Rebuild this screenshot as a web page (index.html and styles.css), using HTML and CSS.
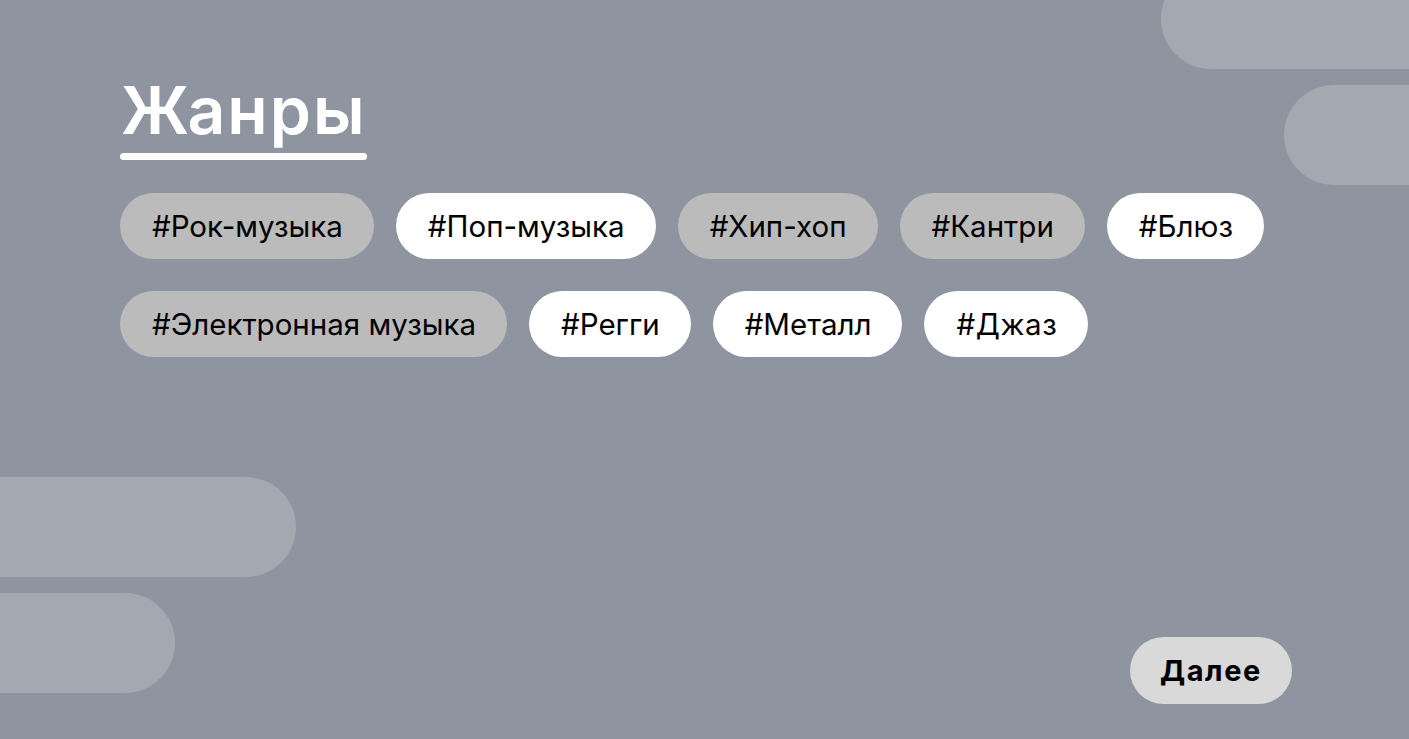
FILE: index.html
```html
<!DOCTYPE html>
<html lang="ru">
<head>
<meta charset="utf-8">
<title>Жанры</title>
<link rel="stylesheet" href="styles.css">
</head>
<body>
<div class="screen">
  <div class="blob blob-tr1"></div>
  <div class="blob blob-tr2"></div>
  <div class="blob blob-bl1"></div>
  <div class="blob blob-bl2"></div>
  <main class="content">
    <div class="heading">
      <h1 class="title">Жанры</h1>
      <div class="underline"></div>
    </div>
    <div class="chips">
      <div class="chip-row">
        <span class="chip chip-gray">#Рок-музыка</span>
        <span class="chip chip-white">#Поп-музыка</span>
        <span class="chip chip-gray">#Хип-хоп</span>
        <span class="chip chip-gray">#Кантри</span>
        <span class="chip chip-white">#Блюз</span>
      </div>
      <div class="chip-row">
        <span class="chip chip-gray">#Электронная музыка</span>
        <span class="chip chip-white">#Регги</span>
        <span class="chip chip-white">#Металл</span>
        <span class="chip chip-white chip-alt">#Джаз</span>
      </div>
    </div>
    <div class="footer">
      <button class="next">Далее</button>
    </div>
  </main>
</div>
</body>
</html>
```

FILE: styles.css
```css
html, body {
  margin: 0;
  padding: 0;
}
body {
  background: #8e94a0;
  font-family: "Inter", "Noto Sans", sans-serif;
  overflow: hidden;
}
.screen {
  position: relative;
  width: 1409px;
  height: 739px;
  overflow: hidden;
  background: #8e94a0;
}
.blob {
  position: absolute;
  height: 100px;
  background: #a4a8b0;
  border-radius: 50px;
}
.blob-tr1 { left: 1161px; top: -31px; width: 320px; }
.blob-tr2 { left: 1284px; top: 85px; width: 200px; }
.blob-bl1 { left: -100px; top: 477px; width: 396px; }
.blob-bl2 { left: -100px; top: 593px; width: 275px; }

.content {
  position: relative;
  display: flex;
  flex-direction: column;
  height: 739px;
  box-sizing: border-box;
  padding: 72px 117px 35px 120px;
}
.heading {
  display: inline-flex;
  flex-direction: column;
  align-self: flex-start;
}
.title {
  margin: 0;
  font-family: "Inter", sans-serif;
  font-weight: 600;
  font-size: 66px;
  line-height: 76px;
  color: #ffffff;
  letter-spacing: 2px;
  padding-left: 1px;
}
.underline {
  margin-top: 5px;
  height: 7px;
  border-radius: 4px;
  background: #ffffff;
}
.chips {
  display: flex;
  flex-direction: column;
  gap: 32px;
  margin-top: 33px;
}
.chip-row {
  display: flex;
  gap: 22px;
}
.chip {
  display: inline-flex;
  align-items: center;
  height: 66px;
  padding: 0 31px 0 32px;
  border-radius: 33px;
  font-size: 29.5px;
  color: #000000;
  box-sizing: border-box;
  white-space: nowrap;
}
.chip-gray { background: #bbbbbb; }
.chip-white { background: #ffffff; }
.chip-alt { letter-spacing: 0.6px; }
.footer {
  margin-top: auto;
  display: flex;
  justify-content: flex-end;
}
.next {
  height: 67px;
  padding: 0 30px;
  border: none;
  border-radius: 34px;
  background: #d9d9d9;
  font-family: "Inter", sans-serif;
  font-weight: 700;
  font-size: 29px;
  letter-spacing: 1.6px;
  color: #000000;
}
```
